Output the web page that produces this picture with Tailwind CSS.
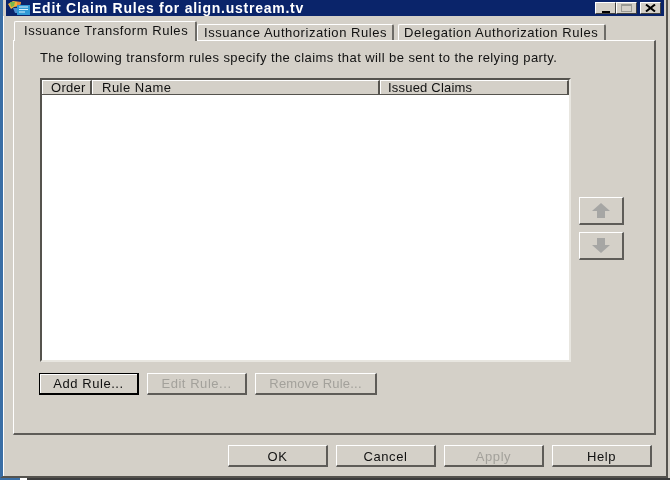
<!DOCTYPE html>
<html>
<head>
<meta charset="utf-8">
<script src="https://cdn.jsdelivr.net/npm/@tailwindcss/browser@4"></script>
</head>
<body class="m-0 bg-[#d4d0c8]">
<div class="w-[670px] h-[480px] overflow-hidden bg-[#d4d0c8] font-['Liberation_Sans',sans-serif] text-[13px] tracking-[0.55px] text-[#111] flex flex-col blur-[0.3px]">
  <div class="h-[478px] w-[668px] border-r-2 border-b-2 border-[#55534e] border-l-[3px] border-l-[#3a6ea5] flex flex-col shrink-0">
    <!-- title bar -->
    <div class="h-[16px] ml-[3px] mr-[2px] bg-[#0a246a] flex items-center text-white font-bold text-[14px] tracking-[0.75px] shrink-0">
      <svg class="w-[22px] h-[14px] ml-[2px] mr-[2px] shrink-0" viewBox="0 0 22 14">
        <path d="M0 3 L5 0 L13 1 L12 5 L6 6 L3 8Z" fill="#f2b33c"/>
        <path d="M2 1 L7 1 L6 5 L3 6Z" fill="#79b84a"/>
        <path d="M9 1 L13 1 L12 4 L9 4Z" fill="#e8873a"/>
        <rect x="9" y="4" width="13" height="10" fill="#2f9ad6"/>
        <path d="M11 6h9M11 8.5h9M11 11h6" stroke="#d7f0fb" stroke-width="1.2"/>
        <path d="M5 7 L9 7 L9 12 L7 12Z" fill="#4f8fd0"/>
      </svg>
      <span class="leading-none">Edit Claim Rules for align.ustream.tv</span>
      <div class="ml-auto mr-[3px] flex items-center">
        <div class="w-[21px] h-[12px] bg-[#d4d0c8] border border-t-white border-l-white border-r-[#404040] border-b-[#404040] flex items-end justify-center"><div class="w-[8px] h-[2px] bg-black mb-[0.5px]"></div></div>
        <div class="w-[21px] h-[12px] bg-[#d4d0c8] border border-t-white border-l-white border-r-[#404040] border-b-[#404040] flex items-center justify-center"><div class="w-[11px] h-[8px] border border-[#9a9a94] border-t-2"></div></div>
        <div class="w-[21px] h-[12px] ml-[3px] bg-[#d4d0c8] border border-t-white border-l-white border-r-[#404040] border-b-[#404040] flex items-center justify-center">
          <svg class="w-[11px] h-[8px]" viewBox="0 0 11 8"><path d="M1 0.5 L10 7.5 M10 0.5 L1 7.5" stroke="#000" stroke-width="2"/></svg>
        </div>
      </div>
    </div>
    <div class="flex-1 flex flex-col border-l border-white pl-[9px]">
      <!-- tabs -->
      <div class="h-[24px] flex items-end pl-[1px] shrink-0 relative z-10">
        <div class="w-[183px] h-[20px] bg-[#d4d0c8] border-t border-l border-white border-r-2 border-r-[#6e6c67] rounded-t-[2px] pl-[9px] mb-[-1px] leading-[17px]">Issuance Transform Rules</div>
        <div class="w-[197px] h-[16px] bg-[#d4d0c8] border-t border-l border-white border-r-2 border-r-[#6e6c67] rounded-t-[2px] pl-[6px] leading-[15px]">Issuance Authorization Rules</div>
        <div class="w-[208px] h-[16px] ml-[4px] bg-[#d4d0c8] border-t border-l border-white border-r-2 border-r-[#6e6c67] rounded-t-[2px] pl-[5px] leading-[15px]">Delegation Authorization Rules</div>
      </div>
      <!-- panel -->
      <div class="w-[643px] h-[395px] border-t border-l border-white border-r-2 border-b-2 border-r-[#5e5c58] border-b-[#5e5c58] pl-[26px] shrink-0">
        <div class="h-[37px] pt-[8px] leading-[17px] tracking-[0.43px]">The following transform rules specify the claims that will be sent to the relying party.</div>
        <div class="flex">
          <!-- list -->
          <div class="w-[531px] h-[284px] bg-white border-2 border-t-[#55534e] border-l-[#55534e] border-r-[#e8e6e0] border-b-[#e8e6e0] shrink-0">
            <div class="h-[14px] flex bg-[#d4d0c8] border-b border-[#55534e] box-content">
              <div class="w-[50px] pl-[8px] border-t border-l border-white border-r-2 border-r-[#55534e] leading-[13px] tracking-[0.3px]">Order</div>
              <div class="w-[288px] pl-[9px] border-t border-l border-white border-r-2 border-r-[#55534e] leading-[13px] tracking-[0.5px]">Rule Name</div>
              <div class="flex-1 pl-[7px] border-t border-l border-white border-r-2 border-r-[#55534e] leading-[13px] tracking-[0.2px]">Issued Claims</div>
            </div>
          </div>
          <!-- up/down -->
          <div class="ml-[8px] pt-[119px] flex flex-col gap-[7px]">
            <div class="w-[45px] h-[28px] border border-t-white border-l-white border-r-2 border-b-2 border-r-[#5e5c58] border-b-[#5e5c58] flex items-center justify-center">
              <svg class="w-[20px] h-[17px]" viewBox="0 0 20 17"><path d="M10 1 L19 9 H14 V16 H6 V9 H1 Z" fill="#a6a6a4"/></svg>
            </div>
            <div class="w-[45px] h-[28px] border border-t-white border-l-white border-r-2 border-b-2 border-r-[#5e5c58] border-b-[#5e5c58] flex items-center justify-center">
              <svg class="w-[20px] h-[17px]" viewBox="0 0 20 17"><path d="M10 16 L1 8 H6 V1 H14 V8 H19 Z" fill="#a6a6a4"/></svg>
            </div>
          </div>
        </div>
        <!-- rule buttons -->
        <div class="mt-[11px] ml-[-1px] flex gap-[8px] text-center leading-[19px]">
          <div class="w-[100px] h-[22px] border border-black border-r-2 border-b-2 shadow-[inset_1px_1px_0_#fff]">Add Rule...</div>
          <div class="w-[100px] h-[22px] border border-t-white border-l-white border-r-2 border-b-2 border-r-[#5e5c58] border-b-[#5e5c58] text-[#a3a19b]">Edit Rule...</div>
          <div class="w-[122px] h-[22px] border border-t-white border-l-white border-r-2 border-b-2 border-r-[#5e5c58] border-b-[#5e5c58] text-[#a3a19b] tracking-[0.2px]">Remove Rule...</div>
        </div>
      </div>
      <!-- footer -->
      <div class="mt-[10px] ml-[215px] flex gap-[8px] text-center leading-[21px]">
        <div class="w-[100px] h-[22px] border border-t-white border-l-white border-r-2 border-b-2 border-r-[#5e5c58] border-b-[#5e5c58]">OK</div>
        <div class="w-[100px] h-[22px] border border-t-white border-l-white border-r-2 border-b-2 border-r-[#5e5c58] border-b-[#5e5c58]">Cancel</div>
        <div class="w-[100px] h-[22px] border border-t-white border-l-white border-r-2 border-b-2 border-r-[#5e5c58] border-b-[#5e5c58] text-[#a3a19b]">Apply</div>
        <div class="w-[100px] h-[22px] border border-t-white border-l-white border-r-2 border-b-2 border-r-[#5e5c58] border-b-[#5e5c58]">Help</div>
      </div>
    </div>
  </div>
  <div class="h-[2px] flex shrink-0">
    <div class="w-[20px] bg-[#3a6ea5]"></div>
    <div class="w-[7px] bg-white"></div>
    <div class="flex-1 bg-[#3c3c3c]"></div>
  </div>
</div>
</body>
</html>
